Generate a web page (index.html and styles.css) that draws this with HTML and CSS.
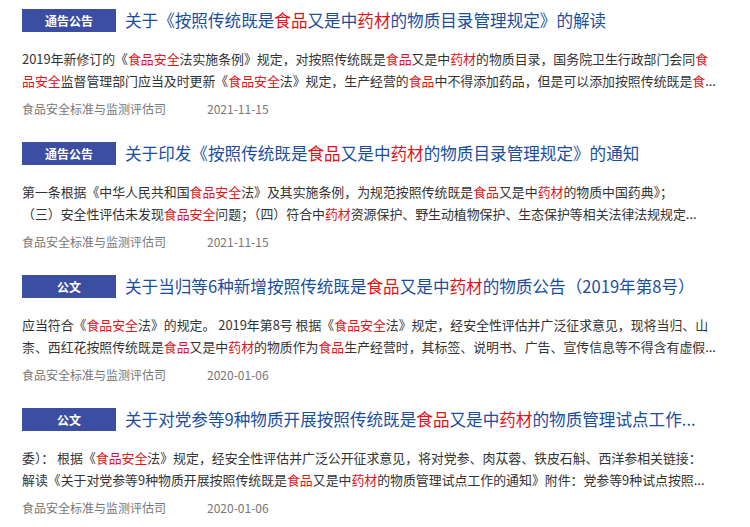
FILE: index.html
```html
<!DOCTYPE html>
<html lang="zh-CN">
<head>
<meta charset="utf-8">
<title>新闻列表</title>
<link rel="stylesheet" href="styles.css">
</head>
<body>
<ul class="list">
  <li class="item">
    <div class="head">
      <span class="badge">通告公告</span>
      <h3 class="title">关于《按照传统既是<em>食品</em>又是中<em>药材</em>的物质目录管理规定》的解读</h3>
    </div>
    <div class="summary">
      <p class="line">2019年新修订的《<em>食品安全</em>法实施条例》规定，对按照传统既是<em>食品</em>又是中<em>药材</em>的物质目录，国务院卫生行政部门会同<em>食</em></p>
      <p class="line"><em>品安全</em>监督管理部门应当及时更新《<em>食品安全</em>法》规定，生产经营的<em>食品</em>中不得添加药品，但是可以添加按照传统既是<em>食</em>...</p>
    </div>
    <div class="meta"><span class="src">食品安全标准与监测评估司</span><span class="date">2021-11-15</span></div>
  </li>
  <li class="item">
    <div class="head">
      <span class="badge">通告公告</span>
      <h3 class="title">关于印发《按照传统既是<em>食品</em>又是中<em>药材</em>的物质目录管理规定》的通知</h3>
    </div>
    <div class="summary">
      <p class="line">第一条根据《中华人民共和国<em>食品安全</em>法》及其实施条例，为规范按照传统既是<em>食品</em>又是中<em>药材</em>的物质中国药典》；</p>
      <p class="line">（三）安全性评估未发现<em>食品安全</em>问题；（四）符合中<em>药材</em>资源保护、野生动植物保护、生态保护等相关法律法规规定...</p>
    </div>
    <div class="meta"><span class="src">食品安全标准与监测评估司</span><span class="date">2021-11-15</span></div>
  </li>
  <li class="item">
    <div class="head">
      <span class="badge">公文</span>
      <h3 class="title">关于当归等6种新增按照传统既是<em>食品</em>又是中<em>药材</em>的物质公告（2019年第8号）</h3>
    </div>
    <div class="summary">
      <p class="line">应当符合《<em>食品安全</em>法》的规定。 2019年第8号 根据《<em>食品安全</em>法》规定，经安全性评估并广泛征求意见，现将当归、山</p>
      <p class="line">柰、西红花按照传统既是<em>食品</em>又是中<em>药材</em>的物质作为<em>食品</em>生产经营时，其标签、说明书、广告、宣传信息等不得含有虚假...</p>
    </div>
    <div class="meta"><span class="src">食品安全标准与监测评估司</span><span class="date">2020-01-06</span></div>
  </li>
  <li class="item">
    <div class="head">
      <span class="badge">公文</span>
      <h3 class="title">关于对党参等9种物质开展按照传统既是<em>食品</em>又是中<em>药材</em>的物质管理试点工作...</h3>
    </div>
    <div class="summary">
      <p class="line">委）： 根据《<em>食品安全</em>法》规定，经安全性评估并广泛公开征求意见，将对党参、肉苁蓉、铁皮石斛、西洋参相关链接：</p>
      <p class="line">解读《关于对党参等9种物质开展按照传统既是<em>食品</em>又是中<em>药材</em>的物质管理试点工作的通知》附件：党参等9种试点按照...</p>
    </div>
    <div class="meta"><span class="src">食品安全标准与监测评估司</span><span class="date">2020-01-06</span></div>
  </li>
</ul>
</body>
</html>
```
FILE: styles.css
```css
html, body {
  margin: 0;
  padding: 0;
  background: #ffffff;
}
body {
  font-family: "Noto Sans CJK SC", "Noto Sans", sans-serif;
  width: 750px;
  height: 527px;
  overflow: hidden;
}
.list {
  list-style: none;
  margin: 0;
  padding: 9px 0 0 22px;
}
.item {
  height: 133px;
}
.head {
  display: flex;
  align-items: center;
  gap: 9px;
  height: 23px;
}
.badge {
  flex: 0 0 auto;
  width: 94px;
  height: 23px;
  line-height: 23px;
  background: #3c4ea2;
  color: #ffffff;
  font-size: 12px;
  font-weight: bold;
  text-align: center;
}
.title {
  margin: 0;
  font-size: 16.6px;
  font-weight: normal;
  color: #1b4ea0;
  white-space: nowrap;
  line-height: 25px;
}
em {
  font-style: normal;
  color: #e3131b;
}
.summary {
  margin-top: 16px;
}
.line {
  margin: 0;
  font-size: 12.9px;
  line-height: 22px;
  color: #333333;
  white-space: nowrap;
}
.meta {
  margin-top: 7px;
  font-size: 12px;
  line-height: 20px;
  color: #777777;
  display: flex;
  gap: 41px;
}
```
